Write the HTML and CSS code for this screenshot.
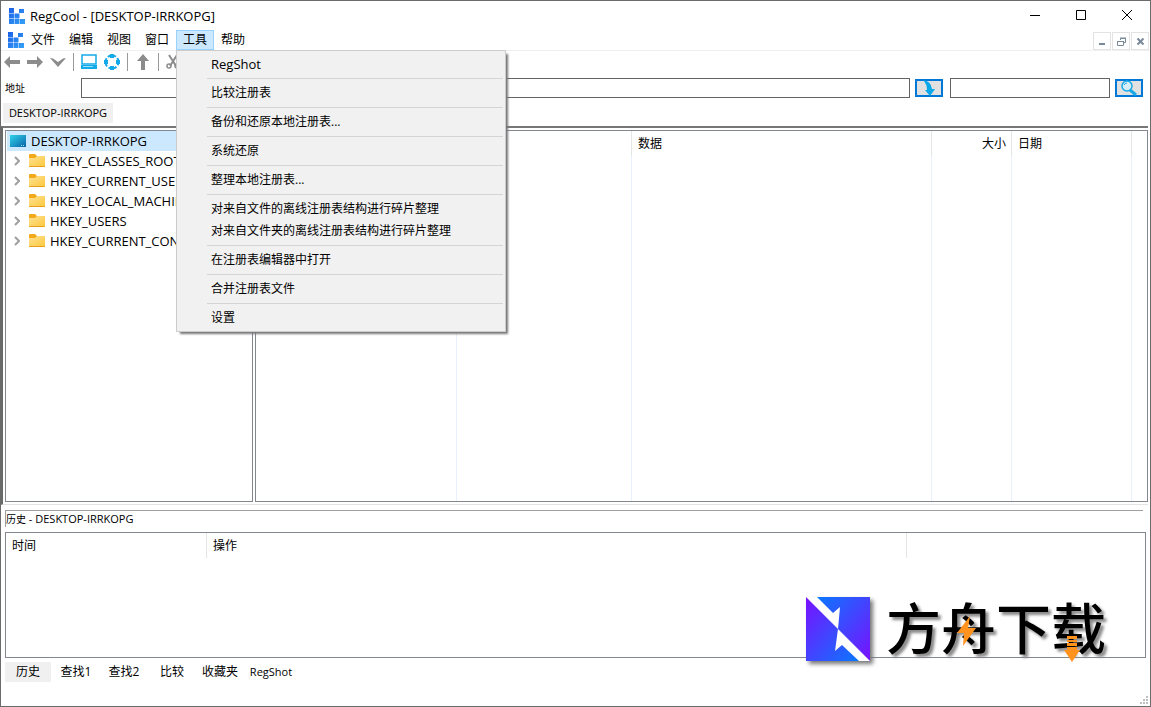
FILE: index.html
```html
<!DOCTYPE html>
<html lang="zh-CN">
<head>
  <meta charset="UTF-8" />
  <meta name="viewport" content="width=device-width, initial-scale=1.0"/>
  <title>RegCool - [DESKTOP-IRRKOPG]</title>
  <link rel="stylesheet" href="styles.css">
</head>
<body>
  <svg class="defs" aria-hidden="true">
    <defs>
      <linearGradient id="blueGrad" x1="0" y1="0" x2="1" y2="1"><stop offset="0" stop-color="#1b5fe8"/><stop offset="1" stop-color="#35a3f7"/></linearGradient>
      <linearGradient id="folderGrad" x1="0" y1="0" x2="1" y2="1"><stop offset="0" stop-color="#ffe292"/><stop offset="1" stop-color="#fcc73d"/></linearGradient>
      <linearGradient id="pcGrad" x1="0" y1="0" x2="1" y2="1"><stop offset="0" stop-color="#2fd3ea"/><stop offset="1" stop-color="#0b63a8"/></linearGradient>
      <linearGradient id="markTop" x1="0" y1="0" x2="1" y2="1"><stop offset="0" stop-color="#0a78ff"/><stop offset="1" stop-color="#7a10ff"/></linearGradient>
      <linearGradient id="markBottom" x1="0" y1="0" x2="1" y2="1"><stop offset="0" stop-color="#7a10ff"/><stop offset="1" stop-color="#0a78ff"/></linearGradient>
      <symbol id="logo" viewBox="0 0 16 16">
        <path fill="url(#blueGrad)" d="M0 0h5v5H0zM10 1h5v4h-5zM0 5.500h5v5H0zM5.500 5.500h5v5h-5zM0 11h5v5H0zM5.500 11h5v5h-5zM11 11h5v5h-5z"/>
      </symbol>
      <symbol id="folder" viewBox="0 0 16 14">
        <path fill="#f2a91c" d="M0 1q0-1 1-1h5l2 2h7q1 0 1 1v3H0z"/>
        <path fill="url(#folderGrad)" d="M0 4h6l2-2h8v10q0 1-1 1H1q-1 0-1-1z"/>
        <path fill="#e8a01c" d="M0 12h16q0 1-1 1H1q-1 0-1-1z"/>
      </symbol>
      <symbol id="chevron" viewBox="0 0 6 10"><path fill="none" stroke="#a0a0a0" stroke-width="2" d="M1 1l4 4-4 4"/></symbol>
    </defs>
  </svg>

  <div class="window">
    <header class="titlebar">
      <svg class="logo"><use href="#logo"/></svg>
      <h1>RegCool - [DESKTOP-IRRKOPG]</h1>
      <div class="window-buttons">
        <button aria-label="最小化"><svg width="11" height="11"><path d="M0 5.500h10" stroke="#000"/></svg></button>
        <button aria-label="最大化"><svg width="11" height="11"><path d="M.5.5h9v9h-9z" fill="none" stroke="#000"/></svg></button>
        <button aria-label="关闭"><svg width="11" height="11"><path d="M0 0l10 10M10 0L0 10" stroke="#000"/></svg></button>
      </div>
    </header>

    <nav class="menubar">
      <svg class="logo"><use href="#logo"/></svg>
      <button>文件</button>
      <button>编辑</button>
      <button>视图</button>
      <button>窗口</button>
      <div class="menu-open">
        <button class="active" aria-expanded="true">工具</button>
        <div class="dropdown" role="menu">
          <button class="latin" role="menuitem">RegShot</button>
          <hr>
          <button role="menuitem">比较注册表</button>
          <hr>
          <button role="menuitem">备份和还原本地注册表...</button>
          <hr>
          <button role="menuitem">系统还原</button>
          <hr>
          <button role="menuitem">整理本地注册表...</button>
          <hr>
          <button role="menuitem">对来自文件的离线注册表结构进行碎片整理</button>
          <button role="menuitem">对来自文件夹的离线注册表结构进行碎片整理</button>
          <hr>
          <button role="menuitem">在注册表编辑器中打开</button>
          <hr>
          <button role="menuitem">合并注册表文件</button>
          <hr>
          <button role="menuitem">设置</button>
        </div>
      </div>
      <button>帮助</button>
      <div class="mdi-buttons">
        <button aria-label="最小化"><svg width="9" height="9"><path d="M1 6h6v2H1z" fill="#78899a"/></svg></button>
        <button aria-label="还原"><svg width="9" height="9"><path d="M3.500 3V1.500h5v4H7M.5 4.500h6v4h-6zM3 1h6M0 4.500h7" fill="none" stroke="#78899a"/></svg></button>
        <button aria-label="关闭"><svg width="9" height="9"><path d="M1.500 1.500l6 6M7.500 1.500l-6 6" stroke="#78899a" stroke-width="2"/></svg></button>
      </div>
    </nav>

    <div class="toolbar">
      <button aria-label="后退"><svg width="16" height="14"><path d="M0 7l6-6v4h10v4H6v4z" fill="#8c8c8c"/></svg></button>
      <button aria-label="前进"><svg width="16" height="14"><path d="M16 7l-6-6v4H0v4h10v4z" fill="#8c8c8c"/></svg></button>
      <button aria-label="历史记录"><svg width="16" height="14"><path d="M0 3l3 .5 5 3.500 5-3.500 3-.5-8 9z" fill="#8c8c8c"/></svg></button>
      <span class="sep"></span>
      <button aria-label="计算机"><svg width="16" height="16"><path d="M1 1h14v9H1z" fill="none" stroke="#14a9e8" stroke-width="1.500"/><path d="M0 11h16v4H0z" fill="#14a9e8"/><path d="M2 12.500h10" stroke="#9be0fa"/></svg></button>
      <button aria-label="刷新"><svg width="16" height="16"><circle cx="8" cy="8" r="6.500" fill="none" stroke="#14a9e8" stroke-width="2" stroke-dasharray="3.400 1.700"/><path d="M6 0h4v4H6zM6 12h4v4H6zM0 6h4v4H0zM12 6h4v4h-4z" fill="#14a9e8"/></svg></button>
      <span class="sep"></span>
      <button class="up" aria-label="向上"><svg width="12" height="16"><path d="M6 0l6 7H8v9H4V7H0z" fill="#8c8c8c"/></svg></button>
      <span class="sep"></span>
      <button aria-label="剪切"><svg width="14" height="16"><path d="M3 1l7 11M11 1L4 12" stroke="#8c8c8c" stroke-width="2"/><circle cx="3" cy="12" r="2" fill="none" stroke="#8c8c8c" stroke-width="1.500"/><circle cx="11" cy="12" r="2" fill="none" stroke="#8c8c8c" stroke-width="1.500"/></svg></button>
    </div>

    <div class="address-row">
      <label for="address">地址</label>
      <input type="text" id="address">
      <button aria-label="转到"><svg width="12" height="16"><path d="M0 0q8 1 9 9h3l-5 7-5-6h2Q4 4 0 0z" fill="#09a8ea"/></svg></button>
      <input type="text" id="search" aria-label="搜索">
      <button aria-label="搜索"><svg width="16" height="16"><circle cx="6" cy="6" r="5" fill="#d7eefa" stroke="#18a9e6" stroke-width="1.500"/><path d="M3 5q1-2 3-2" fill="none" stroke="#18a9e6"/><path d="M9 10l6 5" stroke="#18a9e6" stroke-width="3"/></svg></button>
    </div>

    <div class="doc-tabs"><button>DESKTOP-IRRKOPG</button></div>

    <main class="panes">
      <ul class="tree">
        <li class="root selected"><svg width="16" height="12"><path d="M0 0h16v12H0z" fill="url(#pcGrad)"/><path d="M11 10.500h4" stroke="#8de4ff" stroke-dasharray="1 1"/></svg>DESKTOP-IRRKOPG</li>
        <li><svg class="chevron"><use href="#chevron"/></svg><svg class="folder"><use href="#folder"/></svg>HKEY_CLASSES_ROOT</li>
        <li><svg class="chevron"><use href="#chevron"/></svg><svg class="folder"><use href="#folder"/></svg>HKEY_CURRENT_USER</li>
        <li><svg class="chevron"><use href="#chevron"/></svg><svg class="folder"><use href="#folder"/></svg>HKEY_LOCAL_MACHINE</li>
        <li><svg class="chevron"><use href="#chevron"/></svg><svg class="folder"><use href="#folder"/></svg>HKEY_USERS</li>
        <li><svg class="chevron"><use href="#chevron"/></svg><svg class="folder"><use href="#folder"/></svg>HKEY_CURRENT_CONFIG</li>
      </ul>
      <div class="list values">
        <table>
          <colgroup><col class="c-name"><col class="c-type"><col class="c-data"><col class="c-size"><col class="c-date"><col></colgroup>
          <thead><tr><th></th><th></th><th>数据</th><th class="num">大小</th><th>日期</th><th></th></tr></thead>
          <tbody><tr><td></td><td></td><td></td><td></td><td></td><td></td></tr></tbody>
        </table>
      </div>
    </main>

    <section class="history">
      <h2><span>历史</span> - DESKTOP-IRRKOPG</h2>
      <div class="list">
        <table>
          <colgroup><col class="c-time"><col class="c-action"><col></colgroup>
          <thead><tr><th>时间</th><th>操作</th><th></th></tr></thead>
        </table>
      </div>
      <div class="watermark">
        <svg class="mark" viewBox="0 0 64 64">
          <path d="M0 0h64v64H0z" fill="#fff"/>
          <path d="M11 0h53v64L32 32l2-22-7 6z" fill="url(#markTop)"/>
          <path d="M0 0l32 32-3 22 7-6 17 16H0z" fill="url(#markBottom)"/>
        </svg>
        <span class="brand">方舟下载</span>
        <svg class="bolt" viewBox="0 0 20 30"><path d="M13 0L0 17h7L6 30l13-18h-8z" fill="#ff931e"/></svg>
        <svg class="down" viewBox="0 0 16 26"><path d="M3 0h10v3H3zM3 4h10v2H3zM3 7h10v3H3zM3 11h10v3h3L8 26 0 14h3z" fill="#ff931e"/></svg>
      </div>
    </section>

    <nav class="bottom-tabs">
      <button class="current">历史</button>
      <button>查找1</button>
      <button>查找2</button>
      <button>比较</button>
      <button>收藏夹</button>
      <button class="latin">RegShot</button>
    </nav>
    <footer class="statusbar"><svg width="8" height="8"><path d="M6 0h2v2H6zM3 3h2v2H3zM6 3h2v2H6zM0 6h2v2H0zM3 6h2v2H3zM6 6h2v2H6z" fill="#bfbfbf"/></svg></footer>
  </div>
</body>
</html>
```

FILE: styles.css
```css
* {
  box-sizing: border-box;
}
body {
  margin: 0;
  font: 12px/20px "Open Sans", "Noto Sans CJK SC", sans-serif;
  color: #000;
  background: #fff;
}
button {
  font: inherit;
  color: inherit;
  border: 0;
  padding: 0;
  background: none;
  white-space: nowrap;
}
svg {
  display: block;
  flex: none;
}
.defs {
  position: absolute;
  width: 0;
  height: 0;
}
.window {
  display: flex;
  flex-direction: column;
  min-height: 100vh;
  border: 1px solid #6b6b6b;
}
.logo {
  width: 16px;
  height: 16px;
}

/* title bar */
.titlebar {
  display: flex;
  align-items: center;
  height: 29px;
  padding-left: 8px;
}
.titlebar h1 {
  flex: 1;
  margin: 0 0 0 5px;
  font-size: 13px;
  font-weight: normal;
}
.window-buttons {
  display: flex;
}
.window-buttons button {
  display: flex;
  align-items: center;
  justify-content: center;
  width: 46px;
  height: 28px;
}

/* menu */
.menubar {
  display: flex;
  align-items: center;
  height: 21px;
  padding-left: 7px;
  border-bottom: 1px solid #f0f0f0;
}
.menubar > button,
.menu-open > button {
  width: 38px;
  height: 20px;
}
.menu-open {
  position: relative;
}
.menu-open > .active {
  display: block;
  background: #cce8ff;
  border: 1px solid #99d1ff;
  line-height: 18px;
}
.dropdown {
  position: absolute;
  z-index: 2;
  top: 100%;
  left: 0;
  width: 330px;
  padding: 2px;
  background: #f1f1f1;
  border: 1px solid #ccc;
  box-shadow: 3px 3px 2px -1px #777;
}
.dropdown button {
  display: block;
  width: 100%;
  height: 22px;
  padding-left: 32px;
  text-align: left;
}
.dropdown .latin {
  font-size: 13px;
}
.dropdown hr {
  height: 1px;
  margin: 3px 0 3px 28px;
  border: 0;
  background: #d4d4d4;
}
.mdi-buttons {
  display: flex;
  gap: 1px;
  margin: 2px 1px 0 auto;
}
.mdi-buttons button {
  display: flex;
  align-items: center;
  justify-content: center;
  width: 18px;
  height: 18px;
  border: 1px solid #e3e3e3;
}

/* toolbar */
.toolbar {
  display: flex;
  align-items: center;
  gap: 7px;
  height: 22px;
  padding-left: 3px;
}
.sep {
  width: 1px;
  height: 18px;
  background: #999;
}
.toolbar .up {
  width: 16px;
  padding-left: 2px;
}
.address-row {
  display: flex;
  align-items: center;
  height: 30px;
  padding: 0 7px 0 4px;
}
.address-row label {
  width: 76px;
  font-size: 10px;
}
.address-row input {
  height: 20px;
  border: 1px solid #646464;
  background: #fff;
}
#address {
  flex: 1;
  min-width: 0;
}
#search {
  width: 160px;
}
.address-row button {
  display: flex;
  align-items: center;
  justify-content: center;
  width: 28px;
  height: 18px;
  margin: 0 7px 0 5px;
  background: #e1e1e1;
  border: 2px solid #0078d7;
}
.address-row button:last-child {
  margin-right: 0;
}
.doc-tabs {
  display: flex;
  height: 23px;
  padding-left: 2px;
}
.doc-tabs button {
  width: 110px;
  height: 20px;
  background: #f0f0f0;
  font-size: 11px;
}

/* tree and value list */
.panes {
  display: flex;
  flex: 1;
  gap: 2px;
  min-height: 240px;
  padding: 2px 0 2px 2px;
  margin-right: 2px;
  border: 2px solid #696969;
  border-top-color: #777;
  border-right: 0;
  border-bottom: 1px solid #e3e3e3;
}
.tree {
  width: 248px;
  margin: 0;
  padding: 0 1px;
  overflow: hidden;
  list-style: none;
  border: 1px solid #828790;
  font-size: 13px;
}
.tree li {
  display: flex;
  align-items: center;
  height: 20px;
  padding-left: 7px;
  white-space: nowrap;
}
.tree .root {
  gap: 5px;
  padding-left: 3px;
}
.tree .selected {
  background: #cce8ff;
}
.chevron {
  width: 6px;
  height: 10px;
  margin-right: 9px;
}
.folder {
  width: 16px;
  height: 14px;
  margin-right: 5px;
}
.list {
  display: grid;
  border: 1px solid #828790;
}
.values {
  flex: 1;
  min-width: 0;
}
.list table {
  width: 100%;
  height: 100%;
  table-layout: fixed;
  border-collapse: separate;
  border-spacing: 0;
}
.list th {
  height: 25px;
  padding: 0 5px 0 6px;
  border-right: 1px solid #e5e5e5;
  font-weight: normal;
  text-align: left;
}
.list td {
  border-right: 1px solid #e8f1fc;
}
.list th:last-child,
.list td:last-child {
  border-right: 0;
}
.list .num {
  text-align: right;
}
.c-name { width: 201px; }
.c-type { width: 175px; }
.c-data { width: 300px; }
.c-size { width: 80px; }
.c-date { width: 120px; }
.c-time { width: 201px; }
.c-action { width: 700px; }

/* history */
.history {
  position: relative;
  padding: 5px 4px 0;
}
.history h2 {
  height: 17px;
  margin: 0 3px 5px 0;
  border-top: 1px solid #a0a0a0;
  border-left: 1px solid #a0a0a0;
  font-size: 11px;
  line-height: 16px;
  font-weight: normal;
}
.history h2 span {
  font-size: 10px;
}
.history .list {
  height: 126px;
  align-items: start;
}
.history table {
  height: auto;
}
.watermark {
  position: absolute;
  right: 44px;
  bottom: -4px;
  display: flex;
  align-items: center;
  gap: 16px;
  height: 66px;
}
.mark {
  width: 64px;
  height: 64px;
  filter: drop-shadow(3px 3px 2px #777);
}
.brand {
  height: 72px;
  font: 500 55px/64px "Noto Sans CJK SC", sans-serif;
  text-shadow: 3px 3px 3px #888;
}
.bolt {
  position: absolute;
  left: 151px;
  top: 20px;
  width: 20px;
  height: 30px;
}
.down {
  position: absolute;
  right: 26px;
  bottom: 0;
  width: 16px;
  height: 26px;
}

.bottom-tabs {
  display: flex;
  gap: 2px;
  padding: 4px 4px 0;
}
.bottom-tabs button {
  width: 46px;
  height: 20px;
}
.bottom-tabs .current {
  background: #f0f0f0;
}
.bottom-tabs .latin {
  width: 52px;
  font-size: 11px;
}
.statusbar {
  display: flex;
  align-items: flex-end;
  justify-content: flex-end;
  height: 24px;
  padding: 2px;
}
```
